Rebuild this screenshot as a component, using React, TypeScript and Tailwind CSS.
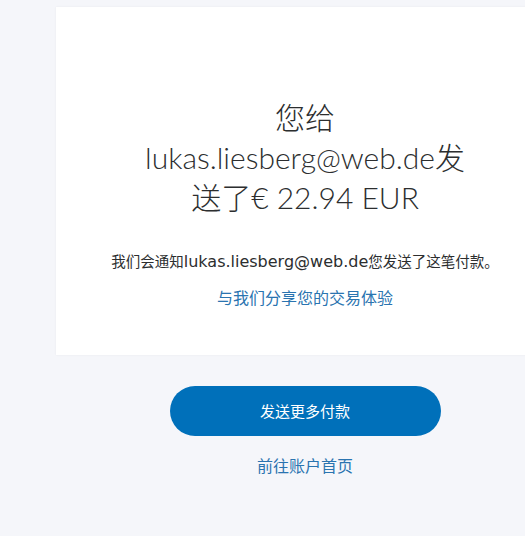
export default function App() {
  return (
    <div className="min-h-[536px] w-full bg-[#f5f6fa] overflow-hidden font-['Lato','Noto_Sans_CJK_SC',sans-serif]">
      <div className="pl-[56px] pt-[7px]">
        <div className="w-[498px] h-[348px] bg-white shadow-[0_0_2px_rgba(0,0,0,0.06)] flex flex-col items-center pt-[90px]">
          <h1 className="w-[340px] text-center text-[30px] leading-[40px] font-light text-[#2c2e2f]">
            您给 lukas.liesberg@web.de发送了€ 22.94 EUR
          </h1>
          <p className="mt-[34px] text-[14.5px] leading-[20px] text-[#2c2e2f] whitespace-nowrap font-['Noto_Sans_CJK_SC',sans-serif]">
            我们会通知<span className="font-['DejaVu_Sans',sans-serif] text-[16px]">lukas.liesberg@web.de</span>您发送了这笔付款。
          </p>
          <a className="mt-[14px] text-[16px] leading-[22px] text-[#2a74b0] font-['Noto_Sans_CJK_SC',sans-serif]">
            与我们分享您的交易体验
          </a>
        </div>
      </div>
      <div className="pl-[56px] w-[554px] flex flex-col items-center mt-[31px]">
        <div className="w-[498px] flex flex-col items-center">
          <button className="w-[271px] h-[50px] rounded-full bg-[#0070ba] text-white text-[15px] font-['Noto_Sans_CJK_SC',sans-serif]">
            发送更多付款
          </button>
          <a className="mt-[18px] text-[16px] leading-[22px] text-[#2a74b0] font-['Noto_Sans_CJK_SC',sans-serif]">
            前往账户首页
          </a>
        </div>
      </div>
    </div>
  );
}
